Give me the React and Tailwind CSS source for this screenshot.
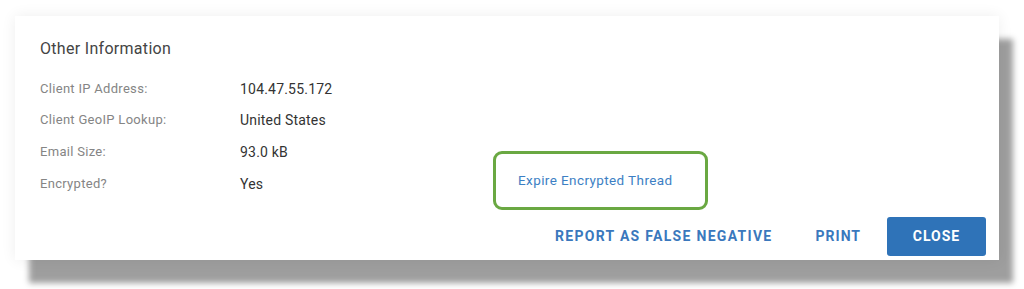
import React from "react";

const rows = [
  ["Client IP Address:", "104.47.55.172"],
  ["Client GeoIP Lookup:", "United States"],
  ["Email Size:", "93.0 kB"],
];

export default function App() {
  return (
    <div
      className="w-[1024px] h-[289px] bg-white overflow-hidden pl-[15px] pt-[16px]"
      style={{ fontFamily: "Roboto, 'Liberation Sans', sans-serif" }}
    >
      <div className="w-[984px] h-[244px] bg-white shadow-[0_0_14px_rgba(0,0,0,0.07),14px_23px_6px_rgba(0,0,0,0.38)] pl-[25px] pr-[13px] pt-[21px] flex flex-col">
        <div className="text-[16px] tracking-[0.3px] text-[#444] leading-[24px]">Other Information</div>
        <div className="mt-[13px] flex flex-col">
          <div className="h-[30px] flex items-center">
            <div className="w-[200px] text-[13px] tracking-[0.3px] text-[#858585]">{rows[0][0]}</div>
            <div className="text-[14px] tracking-[0.2px] text-[#333]">{rows[0][1]}</div>
          </div>
          {rows.slice(1).map(([l, v]) => (
            <div key={l} className="h-[32px] flex items-center">
              <div className="w-[200px] text-[13px] tracking-[0.3px] text-[#858585]">{l}</div>
              <div className="text-[14px] tracking-[0.2px] text-[#333]">{v}</div>
            </div>
          ))}
          <div className="h-[32px] flex items-center">
            <div className="w-[200px] text-[13px] tracking-[0.3px] text-[#858585]">Encrypted?</div>
            <div className="w-[253px] text-[14px] tracking-[0.2px] text-[#333]">Yes</div>
            <div className="border-[3px] border-[#6aa842] rounded-[9px] w-[215px] h-[59px] -mt-[8px] flex items-center pl-[22px]">
              <span className="text-[13.5px] tracking-[0.4px] text-[#3d7fc4]">Expire Encrypted Thread</span>
            </div>
          </div>
        </div>
        <div className="mt-auto mb-[4px] flex items-center justify-end">
          <button className="text-[14px] font-bold tracking-[1.3px] text-[#3a78bd] uppercase mr-[43px]">Report as false negative</button>
          <button className="text-[14px] font-bold tracking-[1px] text-[#3a78bd] uppercase mr-[26px]">Print</button>
          <button className="w-[99px] h-[39px] rounded-[3px] bg-[#2f73b8] text-[14px] font-bold tracking-[1px] text-white uppercase">Close</button>
        </div>
      </div>
    </div>
  );
}
